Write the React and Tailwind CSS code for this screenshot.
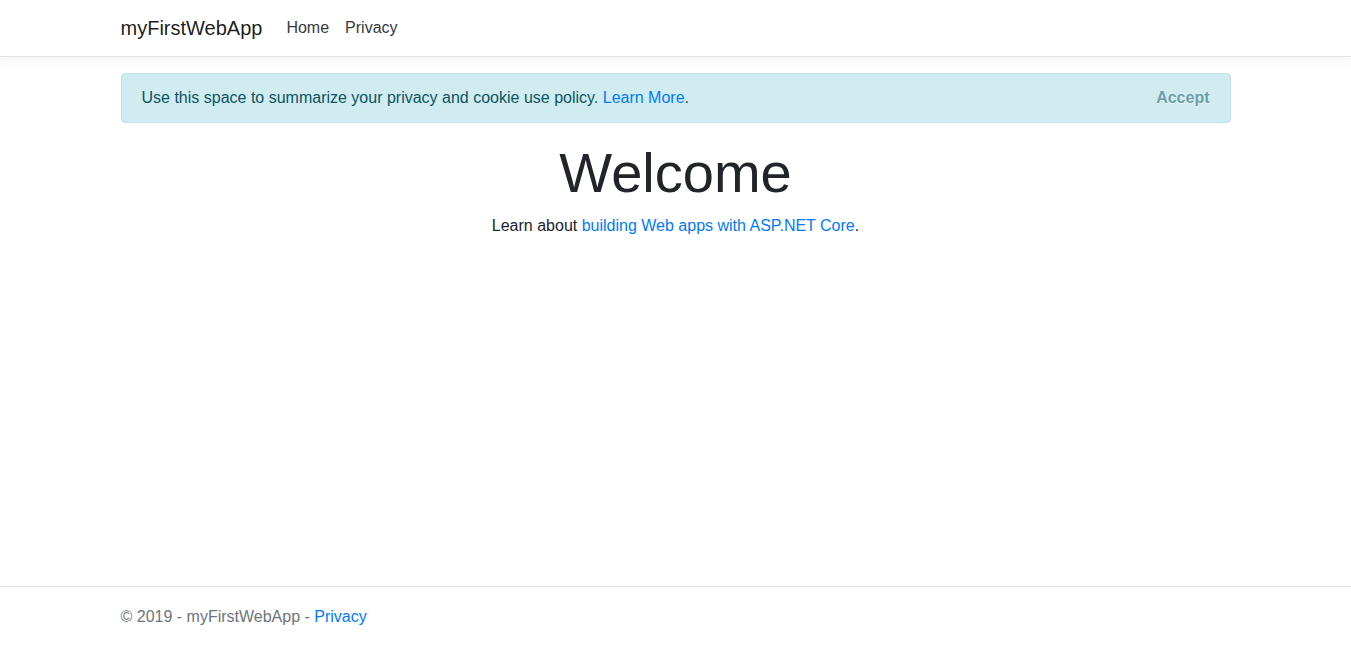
export default function App() {
  return (
    <div className="flex min-h-screen flex-col bg-white text-[16px] leading-6 text-[#212529]" style={{ fontFamily: '"Liberation Sans", Arial, sans-serif' }}>
      <header>
        <nav className="mb-4 border-b border-[#dee2e6] bg-white py-2 shadow-[0_4px_12px_rgba(0,0,0,0.05)]">
          <div className="mx-auto flex w-[1140px] items-center px-[15px]">
            <a className="mr-4 py-[5px] text-[20px] leading-[30px] text-[rgba(0,0,0,0.9)]">myFirstWebApp</a>
            <ul className="flex">
              <li><a className="block px-2 py-2 text-[#343a40]">Home</a></li>
              <li><a className="block px-2 py-2 text-[#343a40]">Privacy</a></li>
            </ul>
          </div>
        </nav>
      </header>
      <div className="mx-auto w-[1140px] flex-1 px-[15px]">
        <div className="mb-4 flex items-center justify-between rounded border border-[#bee5eb] bg-[#d1ecf1] px-5 py-3 text-[#0c5460]">
          <span>
            Use this space to summarize your privacy and cookie use policy.{" "}
            <a className="text-[#007bff]">Learn More</a>.
          </span>
          <button type="button" className="font-bold text-[#0c5460] opacity-50 [text-shadow:0_1px_0_#fff]">
            Accept
          </button>
        </div>
        <main className="pb-4 text-center">
          <h1 className="mb-2 text-[56px] font-light leading-[1.2]">Welcome</h1>
          <p>
            Learn about <a className="text-[#007bff]">building Web apps with ASP.NET Core</a>.
          </p>
        </main>
      </div>
      <footer className="h-[60px] border-t border-[#dee2e6] leading-[59px] text-[#6c757d]">
        <div className="mx-auto w-[1140px] px-[15px]">
          © 2019 - myFirstWebApp - <a className="text-[#007bff]">Privacy</a>
        </div>
      </footer>
    </div>
  );
}
